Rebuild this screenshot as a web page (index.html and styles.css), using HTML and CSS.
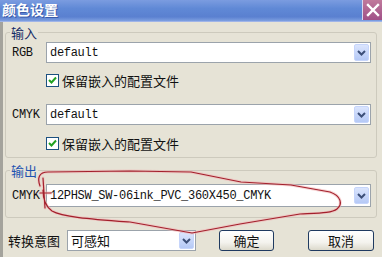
FILE: index.html
```html
<!DOCTYPE html>
<html>
<head>
    <title>颜色设置</title>
    <meta charset="UTF-8">
    <link rel="stylesheet" href="styles.css">
</head>
<body>
    <div class="window">
        <div class="titlebar">
            <span class="title">颜色设置</span>
            <span class="close">
                <svg width="20" height="20" viewBox="0 0 20 20"><path d="M5 5 L15 15 M15 5 L5 15" stroke="#fff" stroke-width="2.4" stroke-linecap="square"/></svg>
            </span>
        </div>

        <div class="client">
            <fieldset class="group">
                <legend class="in">输入</legend>
                <div class="row">
                    <span class="lbl">RGB</span>
                    <div class="combo">
                        <span class="val">default</span>
                        <span class="drop"><svg width="9" height="6" viewBox="0 0 9 6"><path d="M1 1 L4.5 4.5 L8 1" fill="none" stroke="#3c4f78" stroke-width="2"/></svg></span>
                    </div>
                </div>
                <div class="check first">
                    <span class="box"><svg width="11" height="11" viewBox="0 0 11 11"><path d="M2 5 L4.5 7.5 L9 2.5" fill="none" stroke="#21a121" stroke-width="2"/></svg></span>
                    <span>保留嵌入的配置文件</span>
                </div>
                <div class="row second">
                    <span class="lbl">CMYK</span>
                    <div class="combo">
                        <span class="val">default</span>
                        <span class="drop"><svg width="9" height="6" viewBox="0 0 9 6"><path d="M1 1 L4.5 4.5 L8 1" fill="none" stroke="#3c4f78" stroke-width="2"/></svg></span>
                    </div>
                </div>
                <div class="check">
                    <span class="box"><svg width="11" height="11" viewBox="0 0 11 11"><path d="M2 5 L4.5 7.5 L9 2.5" fill="none" stroke="#21a121" stroke-width="2"/></svg></span>
                    <span>保留嵌入的配置文件</span>
                </div>
            </fieldset>

            <fieldset class="group output">
                <legend class="out">输出</legend>
                <div class="row tall">
                    <span class="lbl">CMYK</span>
                    <div class="combo">
                        <span class="val">12PHSW_SW-06ink_PVC_360X450_CMYK</span>
                        <span class="drop"><svg width="9" height="6" viewBox="0 0 9 6"><path d="M1 1 L4.5 4.5 L8 1" fill="none" stroke="#3c4f78" stroke-width="2"/></svg></span>
                    </div>
                </div>
            </fieldset>

            <div class="footer">
                <span class="intent">转换意图</span>
                <div class="combo small">
                    <span class="val cjk">可感知</span>
                    <span class="drop"><svg width="9" height="6" viewBox="0 0 9 6"><path d="M1 1 L4.5 4.5 L8 1" fill="none" stroke="#3c4f78" stroke-width="2"/></svg></span>
                </div>
                <button class="btn ok">确定</button>
                <button class="btn cancel">取消</button>
            </div>
        </div>

        <!-- hand-drawn marker around the output profile -->
        <svg class="ink" width="382" height="257" viewBox="0 0 382 257">
            <g fill="none" stroke-linecap="round" stroke-linejoin="round">
                <path class="halo" d="M40 186 C37 178 39 172 48 172 L130 171 L191 172 L241 182 L291 185 L330 192 C341 196 343 204 337 209 C332 213 320 213 300 214 L240 224 L192 233 L130 222 C90 219 62 217 52 211 C45 206 43 198 43 190 M43 178 L45 208 M40 193 L51 193"/>
                <path class="line" d="M40 186 C37 178 39 172 48 172 L130 171 L191 172 L241 182 L291 185 L330 192 C341 196 343 204 337 209 C332 213 320 213 300 214 L240 224 L192 233 L130 222 C90 219 62 217 52 211 C45 206 43 198 43 190 M43 178 L45 208 M40 193 L51 193"/>
            </g>
        </svg>
    </div>
</body>
</html>
```

FILE: styles.css
```css
body {
    margin: 0;
    font-family: "Noto Sans CJK SC", "Liberation Sans", sans-serif;
    font-size: 13px;
    color: #111;
}
.window {
    position: relative;
    width: 382px;
    height: 257px;
    overflow: hidden;
    background: #e6e3d6;
}
.titlebar {
    height: 22px;
    display: flex;
    align-items: flex-start;
    justify-content: space-between;
    background: linear-gradient(#7b9ce0, #6089d6 40%, #5a80d0 80%, #7e9fe0);
    border-bottom: 1px solid #9fb4e8;
    box-sizing: border-box;
}
.title {
    color: #fff;
    font-weight: bold;
    font-size: 14px;
    line-height: 18px;
    padding-left: 2px;
    text-shadow: 1px 1px 0 #3a5aa8;
}
.close {
    width: 20px;
    height: 20px;
    background: linear-gradient(#c07a9c, #a05088);
    border-left: 1px solid #d8d8f0;
    box-sizing: border-box;
}
.close svg {
    display: block;
}
.client {
    height: 235px;
    box-sizing: border-box;
    padding: 3px 5px 0 2px;
    border-left: 3px solid #a4a39c;
}
.group {
    margin: 0;
    padding: 2px 5px 7px 6px;
    border: 1px solid #cdcabd;
    border-radius: 3px;
    min-width: 0;
}
.group.output {
    margin-top: 5px;
    padding-top: 6px;
    padding-bottom: 10px;
}
legend {
    padding: 0 1px;
    margin-left: -2px;
    font-size: 13px;
    line-height: 15px;
}
legend.in {
    color: #142a66;
}
legend.out {
    color: #1e52b0;
}
.row {
    display: flex;
    align-items: center;
    height: 21px;
}
.row.second {
    margin-top: 17px;
}
.row.tall {
    height: 23px;
}
.lbl {
    width: 34px;
    font-family: "Liberation Mono", monospace;
    font-size: 12px;
    letter-spacing: -0.3px;
}
.combo {
    flex: 1;
    height: 100%;
    display: flex;
    align-items: center;
    justify-content: space-between;
    box-sizing: border-box;
    border: 1px solid #9ba3ab;
    background: #fff;
}
.val {
    padding-left: 3px;
    font-family: "Liberation Mono", monospace;
    font-size: 12px;
    letter-spacing: -0.3px;
    white-space: nowrap;
}
.val.cjk {
    font-family: "Noto Sans CJK SC", sans-serif;
    font-size: 13px;
    letter-spacing: 0;
}
.drop {
    width: 15px;
    height: 17px;
    margin-right: 1px;
    display: flex;
    align-items: center;
    justify-content: center;
    box-sizing: border-box;
    border: 1px solid #c6d5fb;
    border-radius: 2px;
    background: linear-gradient(#dbe5fd, #b5c9f6);
}
.check {
    display: flex;
    align-items: center;
    gap: 3px;
    height: 13px;
    margin: 12px 0 0 34px;
}
.check.first {
    margin-top: 11px;
}
.box {
    width: 13px;
    height: 13px;
    box-sizing: border-box;
    border: 1px solid #1c5180;
    background: #fff;
    display: flex;
    align-items: center;
    justify-content: center;
}
.footer {
    display: flex;
    align-items: center;
    height: 21px;
    margin-top: 12px;
    padding-left: 3px;
}
.intent {
    width: 59px;
}
.combo.small {
    flex: none;
    width: 129px;
}
.btn {
    height: 21px;
    margin: 0;
    padding: 0;
    font-family: "Noto Sans CJK SC", sans-serif;
    font-size: 13px;
    color: #111;
    border: 1px solid #1f3a60;
    border-radius: 3px;
    background: linear-gradient(#ffffff, #f4f3ee 60%, #dcd9cc);
}
.btn.ok {
    width: 55px;
    margin-left: 23px;
}
.btn.cancel {
    width: 66px;
    margin-left: 34px;
}
.ink {
    position: absolute;
    left: 0;
    top: 0;
    pointer-events: none;
}
.ink .halo {
    stroke: #f2b8b8;
    stroke-width: 3;
    opacity: 0.6;
}
.ink .line {
    stroke: #a3202c;
    stroke-width: 1.2;
}
```
